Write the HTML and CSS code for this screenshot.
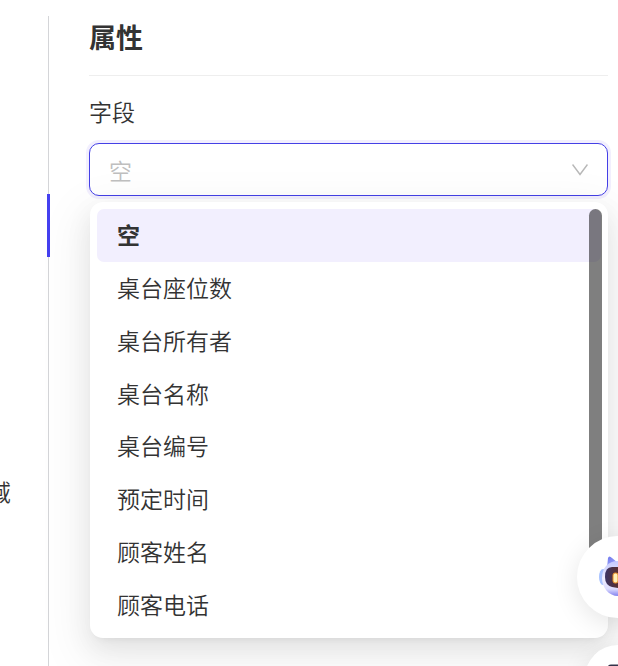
FILE: index.html
```html
<!DOCTYPE html>
<html lang="zh-CN">
<head>
<meta charset="utf-8">
<meta name="viewport" content="width=device-width, initial-scale=1">
<title>属性</title>
<link rel="stylesheet" href="styles.css">
</head>
<body>
<div class="layout">
  <aside class="side"><span class="side-label">域</span></aside>
  <div class="divider"><span class="handle"></span></div>
  <main class="panel">
    <h2 class="title">属性</h2>
    <label class="label" for="field">字段</label>
    <div class="field">
      <select class="select" id="field"><option>空</option></select>
      <svg class="arrow" viewBox="0 0 16 12" aria-hidden="true"><path d="M.5.5 8 10.5 15.5.5"/></svg>
      <div class="dropdown">
        <ul class="options" role="listbox" aria-label="字段">
          <li class="option selected" role="option" aria-selected="true">空</li>
          <li class="option" role="option">桌台座位数</li>
          <li class="option" role="option">桌台所有者</li>
          <li class="option" role="option">桌台名称</li>
          <li class="option" role="option">桌台编号</li>
          <li class="option" role="option">预定时间</li>
          <li class="option" role="option">顾客姓名</li>
          <li class="option" role="option">顾客电话</li>
        </ul>
        <span class="thumb"></span>
      </div>
    </div>
  </main>
</div>
<div class="floats">
  <button class="float bot" type="button" aria-label="助手">
    <svg viewBox="0 0 40 44" width="40" height="44" aria-hidden="true">
      <defs>
        <linearGradient id="shell" x1="0" y1="0" x2="0" y2="1">
          <stop offset="0" stop-color="#c3c9ff"/><stop offset=".5" stop-color="#f1efff"/><stop offset=".8" stop-color="#dcdcff"/><stop offset="1" stop-color="#8381ee"/>
        </linearGradient>
        <linearGradient id="ear" x1="0" y1="0" x2="1" y2="1">
          <stop offset="0" stop-color="#6f78ee"/><stop offset="1" stop-color="#c3c8ff"/>
        </linearGradient>
        <linearGradient id="face" x1="0" y1="0" x2="1" y2="0">
          <stop offset="0" stop-color="#3b3566"/><stop offset=".5" stop-color="#59302f"/><stop offset="1" stop-color="#3b3566"/>
        </linearGradient>
      </defs>
      <path d="M9 13 10 3Q11 0 14 3L20 8 26 3Q29 0 30 3L31 13Z" fill="url(#ear)"/>
      <ellipse cx="5" cy="22" rx="4" ry="8" fill="#a9c3ff"/>
      <ellipse cx="35" cy="22" rx="4" ry="8" fill="#a9c3ff"/>
      <path d="M20 6C10 6 4 13 4 23 4 33 11 41 20 41S36 33 36 23C36 13 30 6 20 6Z" fill="url(#shell)"/>
      <path d="M14 12H26Q34 12 34 23 34 34 26 34L14 32Q7 30 7 22 7 12 14 12Z" fill="url(#face)"/>
      <rect x="15" y="18" width="5" height="10" rx="2" fill="#fff0b8" stroke="#e78a22" stroke-width="1"/>
      <rect x="25" y="18" width="5" height="10" rx="2" fill="#fff0b8" stroke="#e78a22" stroke-width="1"/>
    </svg>
  </button>
  <button class="float more" type="button" aria-label="更多">
    <svg viewBox="0 0 24 28" width="24" height="28" aria-hidden="true"><rect x="3" y="2" width="18" height="20" rx="2" fill="none" stroke="#34344a" stroke-width="3"/></svg>
  </button>
</div>
</body>
</html>
```
FILE: styles.css
```css
* { box-sizing: border-box; }

body {
  margin: 0;
  background: #fff;
  color: #333;
  font-family: "Noto Sans CJK SC", sans-serif;
  font-size: 23px;
  font-weight: 350;
  line-height: 34px;
  overflow: hidden;
}

.layout {
  display: flex;
  min-height: 100vh;
  padding: 16px 10px 0 0;
}

.side {
  width: 47px;
  padding: 458px 36px 0 0;
  display: flex;
  justify-content: flex-end;
  overflow: hidden;
}

.side-label { flex: none; }

.divider {
  width: 3px;
  margin-right: 39px;
  padding-top: 178px;
  background: linear-gradient(#d4d5d8, #d4d5d8) center / 1px 100% no-repeat;
}

.handle {
  display: block;
  height: 63px;
  background: #4540f0;
}

.panel {
  flex: 1;
  min-width: 0;
}

.title {
  margin: 0 0 18px;
  padding-bottom: 17px;
  border-bottom: 1px solid #eee;
  font-size: 27px;
  line-height: 42px;
  font-weight: 700;
}

.label {
  display: block;
  margin-bottom: 15px;
}

.field { position: relative; }

.select {
  appearance: none;
  display: block;
  width: 100%;
  height: 53px;
  padding: 0 60px 0 19px;
  border: 1px solid #4540e6;
  border-radius: 10px;
  outline: none;
  background: #fff;
  box-shadow: 0 0 0 3px #f2effe;
  color: #bfbfbf;
  font: inherit;
}

.arrow {
  position: absolute;
  top: 21px;
  right: 20px;
  width: 16px;
  height: 12px;
  fill: none;
  stroke: #b8b8b8;
  stroke-width: 1.5;
}

.dropdown {
  position: absolute;
  top: 59px;
  left: 1px;
  right: 0;
  padding: 7px;
  border-radius: 13px;
  background: #fff;
  box-shadow:
    0 10px 26px rgba(0, 0, 0, .08),
    0 5px 10px -7px rgba(0, 0, 0, .12),
    0 15px 46px 13px rgba(0, 0, 0, .05);
}

.options {
  display: grid;
  grid-template-rows: repeat(8, 1fr);
  height: 422px;
  margin: 0;
  padding: 0;
  list-style: none;
}

.option {
  display: flex;
  align-items: center;
  padding: 0 20px 2px;
  border-radius: 7px;
}

.selected {
  background: #f2effe;
  font-weight: 700;
}

.thumb {
  position: absolute;
  top: 7px;
  right: 6px;
  width: 13px;
  height: 360px;
  border-radius: 7px;
  background: rgba(0, 0, 0, .5);
}

.floats {
  position: fixed;
  top: 536px;
  right: -41px;
  display: flex;
  flex-direction: column;
  align-items: center;
  gap: 27px;
}

.float {
  display: grid;
  place-items: center;
  padding: 0;
  border: 0;
  border-radius: 50%;
  background: #fff;
  box-shadow: 0 6px 26px rgba(0, 0, 0, .1);
}

.bot {
  width: 82px;
  height: 82px;
}

.more {
  width: 66px;
  height: 66px;
}
```
